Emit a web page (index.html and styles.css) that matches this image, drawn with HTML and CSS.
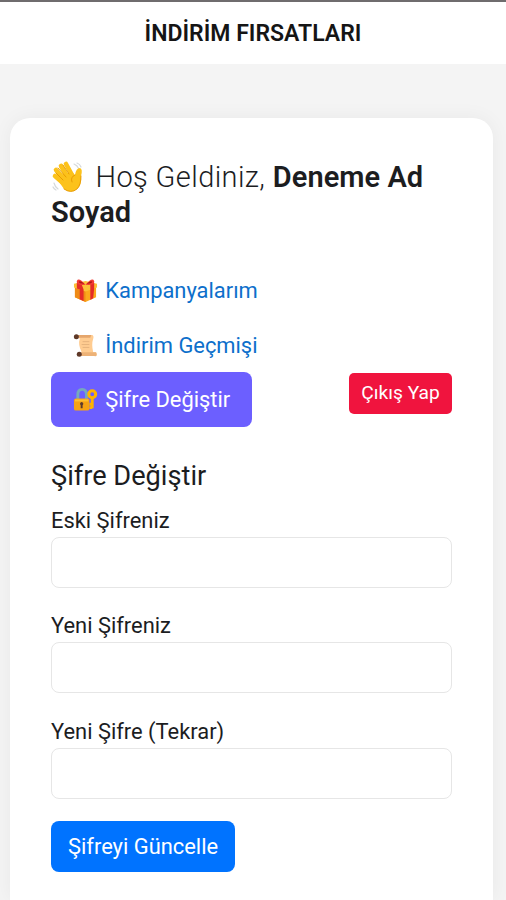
FILE: index.html
```html
<!DOCTYPE html>
<html lang="tr">
<head>
    <meta charset="UTF-8">
    <meta name="viewport" content="width=device-width, initial-scale=1.0">
    <title>İndirim Fırsatları</title>
    <link rel="stylesheet" href="styles.css">
</head>
<body>
    <header class="topbar">İNDİRİM FIRSATLARI</header>

    <main class="card">
        <h2 class="welcome">
            <svg class="icon-wave" viewBox="0 0 34 34">
                <g fill="none" stroke="#d5d8da" stroke-width="1.2" stroke-linecap="round">
                    <path d="M23 4q3 1 5 5M26 3q3 1 4 4M3 23q1 4 4 6M2 27q1 2 3 3"/>
                </g>
                <g fill="none" stroke="#fcc21b" stroke-width="4.6" stroke-linecap="round">
                    <path d="M17 18L10 6M14 20L5 10M12 23L4 16M21 15L15 4"/>
                </g>
                <path fill="#fcc21b" d="M6 19L20 11L24 15Q25 8 29 8Q32 9 30 16Q31 25 26 29Q20 34 13 29Z"/>
                <path fill="none" stroke="#e59600" stroke-width=".9" stroke-linecap="round" d="M18 14L12 5M15 17L7 8M12 20L5 13M24 15Q19 17 21 22M13 29Q20 34 26 29Q30 25 30 16"/>
            </svg>
            Hoş Geldiniz, <strong>Deneme Ad Soyad</strong>
        </h2>

        <div class="menu-row">
            <nav class="menu">
                <a href="#" class="menu-link">
                    <svg class="icon" viewBox="0 0 26 26">
                        <path fill="#fba91c" d="M2 9L13 12L24 9V20L13 25L2 20Z"/>
                        <path fill="#ef8b16" d="M2 9L13 12V25L2 20Z"/>
                        <path fill="#fcc038" d="M1 6L13 3L25 6V10L13 14L1 10Z"/>
                        <path fill="#e42c27" d="M4 5L8 4L11 12V24L7 22V12L4 11ZM18 4L22 5V11L21 21L18 23Z"/>
                        <path fill="#f23b34" d="M13 7Q3 8 4 3Q6-1 13 7Q20-1 22 3Q23 8 13 7Z"/>
                        <path fill="#ac1717" d="M12 6Q7 2 6 4Q6 6 12 6M14 6Q19 2 20 4Q20 6 14 6"/>
                    </svg>
                    Kampanyalarım
                </a>
                <a href="#" class="menu-link">
                    <svg class="icon" viewBox="0 0 26 26">
                        <path fill="#ffcc91" d="M4 2H20Q22 3 21 6Q19 12 21 20L24 20Q26 24 22 24H7L9 20Q5 12 7 6Z"/>
                        <path fill="#edb277" d="M8 20H24Q26 25 22 24H6Z"/>
                        <path fill="#e5a66c" d="M4 2H19L18 5H5Z"/>
                        <circle fill="#5f3928" cx="3.5" cy="4" r="2.6"/>
                        <circle fill="#5f3928" cx="6.5" cy="22" r="2.6"/>
                        <path stroke="#e5b27c" stroke-width="1" d="M10 9h7M9 12h8M10 15h7"/>
                    </svg>
                    İndirim Geçmişi
                </a>
                <a href="#" class="menu-link active">
                    <svg class="icon" viewBox="0 0 26 26">
                        <path fill="none" stroke="#75a9bd" stroke-width="3" d="M5 13V8Q5 2.5 9.5 2.5T14 8V13"/>
                        <path fill="none" stroke="#ffb300" stroke-width="3" d="M20 10V22M20 18H17M20 21.5H17"/>
                        <circle fill="none" stroke="#ffb300" stroke-width="3.2" cx="20" cy="7.5" r="3.6"/>
                        <rect fill="#f6a313" x="1" y="12" width="16" height="12.5" rx="2"/>
                        <path fill="#ffc02e" d="M2 13H16V15H2Z"/>
                        <path fill="#5c3b2e" d="M9 15.5A2 2 0 0 1 10 19V22H8V19A2 2 0 0 1 9 15.5"/>
                    </svg>
                    Şifre Değiştir
                </a>
            </nav>
            <a href="#" class="logout">Çıkış Yap</a>
        </div>

        <form class="password-form">
            <h3>Şifre Değiştir</h3>
            <div class="form-group">
                <label for="old_password">Eski Şifreniz</label>
                <input type="password" id="old_password" name="old_password">
            </div>
            <div class="form-group">
                <label for="new_password">Yeni Şifreniz</label>
                <input type="password" id="new_password" name="new_password">
            </div>
            <div class="form-group">
                <label for="new_password2">Yeni Şifre (Tekrar)</label>
                <input type="password" id="new_password2" name="new_password2">
            </div>
            <button type="submit">Şifreyi Güncelle</button>
        </form>
    </main>
</body>
</html>
```
FILE: styles.css
```css
* {
    box-sizing: border-box;
}
body {
    margin: 0;
    background: #f4f4f4;
    color: #1c1d1f;
    font-family: Roboto, sans-serif;
    font-size: 21.9px;
}
.topbar {
    height: 64px;
    border-top: 2px solid #6f6c6e;
    background: #fff;
    color: #151515;
    font-size: 23px;
    font-weight: 600;
    line-height: 64px;
    text-align: center;
}
.card {
    height: 782px;
    margin: 54px 13px 0 10px;
    padding: 42px 41px 0;
    border-radius: 20px 20px 0 0;
    background: #fff;
    box-shadow: 0 0 20px rgba(0, 0, 0, 0.05);
}
.welcome {
    margin: 0;
    font-size: 29px;
    font-weight: 350;
    letter-spacing: 0.4px;
    line-height: 35px;
}
.welcome strong {
    font-weight: 600;
    letter-spacing: 0.05px;
}
.icon-wave {
    width: 34px;
    height: 34px;
    margin-right: 3px;
    vertical-align: -7px;
}
.menu-row {
    display: flex;
    justify-content: space-between;
    align-items: flex-end;
    margin-top: 33.6px;
}
.menu {
    display: flex;
    flex-direction: column;
    align-items: flex-start;
}
.menu-link {
    display: flex;
    align-items: center;
    gap: 7px;
    height: 54.4px;
    padding: 0 21.5px 0 22.3px;
    border-radius: 8px;
    color: #0d6fcb;
    text-decoration: none;
}
.menu-link.active {
    background: #6c5fff;
    color: #fff;
}
.icon {
    width: 25px;
    height: 25px;
}
.logout {
    height: 41px;
    margin-bottom: 13px;
    padding: 0 12.3px;
    border-radius: 5px;
    background: #f0143e;
    color: #fff;
    font-size: 19.2px;
    line-height: 40px;
    text-decoration: none;
}
.password-form h3 {
    margin: 31px 0 13px;
    font-size: 27.2px;
    font-weight: 400;
    line-height: 36px;
}
.form-group {
    margin-bottom: 24.6px;
}
.form-group:last-of-type {
    margin-bottom: 22px;
}
label {
    display: block;
    height: 30px;
    line-height: 27px;
}
input {
    display: block;
    width: 100%;
    height: 51px;
    border: 1px solid #e6e6e6;
    border-radius: 8px;
    background: #fff;
}
button {
    height: 51px;
    padding: 0 17px;
    border: none;
    border-radius: 8px;
    background: #0073ff;
    color: #fff;
    font-family: inherit;
    font-size: 21.9px;
}
```
